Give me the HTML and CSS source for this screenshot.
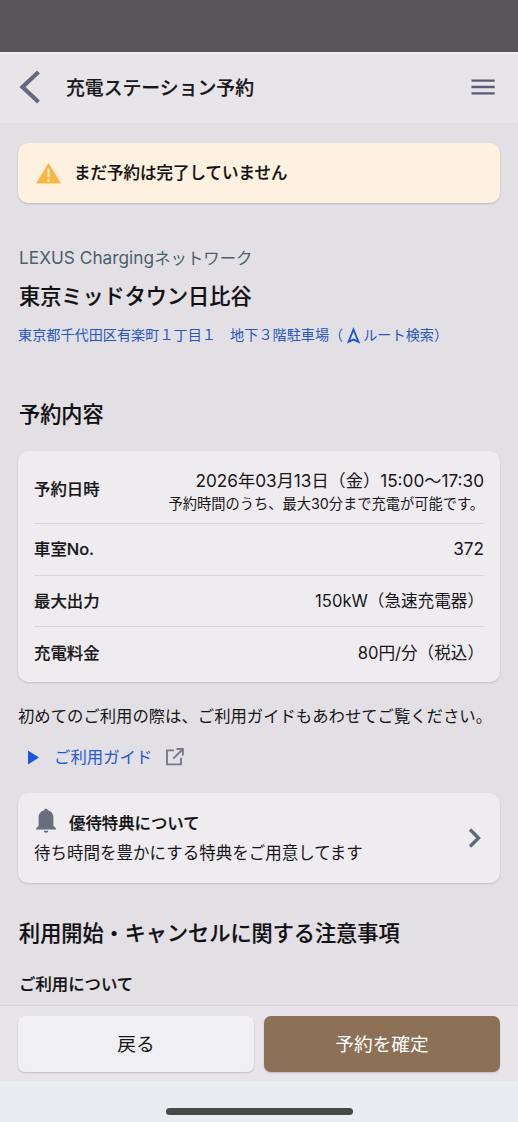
FILE: index.html
```html
<!DOCTYPE html>
<html lang="ja">
<head>
<meta charset="utf-8">
<meta name="viewport" content="width=device-width, initial-scale=1">
<title>充電ステーション予約</title>
<link rel="stylesheet" href="styles.css">
</head>
<body>
<div class="screen">
  <div class="status-bar"></div>
  <header class="header">
    <svg class="back-icon" viewBox="0 0 22 34"><path d="M19.5 2 3.5 17 19.5 32" fill="none" stroke="#646a7d" stroke-width="4.2"/></svg>
    <h1 class="title">充電ステーション予約</h1>
    <svg class="menu-icon" viewBox="0 0 24 18"><path d="M.5 2.7h23.2M.5 9h23.2M.5 15.3h23.2" stroke="#5a597a" stroke-width="2.3"/></svg>
  </header>
  <main class="content">
    <div class="alert">
      <svg class="warn-icon" viewBox="0 0 25 21"><path d="M12.5 0 25 20.5H0Z" fill="#fcb540"/><path d="M12.5 5.5v8.8M12.5 16.2v2.3" stroke="#fff3e0" stroke-width="2"/></svg>
      <span>まだ予約は完了していません</span>
    </div>
    <section class="station">
      <p class="network"><span class="brand">LEXUS Charging</span>ネットワーク</p>
      <h2 class="heading">東京ミッドタウン日比谷</h2>
      <a class="address"><span>東京都千代田区有楽町１丁目１　地下３階駐車場（</span><svg class="route-icon" viewBox="0 0 13 17"><path d="M6.5 2.5 11.5 14.9 6.5 12.6 1.5 14.9Z" fill="none" stroke="#1c53cf" stroke-width="1.8"/></svg><span class="route-label">ルート検索）</span></a>
    </section>
    <h2 class="heading details-heading">予約内容</h2>
    <dl class="card details">
      <div class="row row-date"><dt>予約日時</dt><dd><span class="date">2026年03月13日（金）15:00〜17:30</span><span class="note">予約時間のうち、最大30分まで充電が可能です。</span></dd></div>
      <div class="row"><dt>車室No.</dt><dd class="number">372</dd></div>
      <div class="row"><dt>最大出力</dt><dd>150kW（急速充電器）</dd></div>
      <div class="row"><dt>充電料金</dt><dd>80円/分（税込）</dd></div>
    </dl>
    <p class="intro">初めてのご利用の際は、ご利用ガイドもあわせてご覧ください。</p>
    <a class="guide">
      <svg class="play-icon" viewBox="0 0 11 15"><path d="M0 .5 11 7.5 0 14.5Z" fill="#1c53d8"/></svg>
      <span>ご利用ガイド</span>
      <svg class="external-icon" viewBox="0 0 18 18"><path d="M8 2.4H1V16.4H15V9.8M10.5 1H16.9V7.4M16.4 1.5 7.2 10.7" fill="none" stroke="#787a8b" stroke-width="1.9"/></svg>
    </a>
    <a class="card benefit">
      <div class="benefit-text">
        <div class="benefit-title"><svg class="bell-icon" viewBox="0 0 20 25"><path d="M8.3 2.2a1.7 1.7 0 0 1 3.4 0C15.5 3 17.4 6 17.4 9.6V17.8L20 20.4V21.6H0V20.4L2.6 17.8V9.6C2.6 6 4.5 3 8.3 2.2ZM7.7 22.7H12.3A2.3 2 0 0 1 7.7 22.7Z" fill="#686d80"/></svg><h3 class="subheading">優待特典について</h3></div>
        <p class="benefit-note">待ち時間を豊かにする特典をご用意してます</p>
      </div>
      <svg class="next-icon" viewBox="0 0 13 20"><path d="M2 1.5 10.5 10 2 18.5" fill="none" stroke="#646a7d" stroke-width="3.4"/></svg>
    </a>
    <h2 class="heading rules-heading">利用開始・キャンセルに関する注意事項</h2>
    <h3 class="subheading">ご利用について</h3>
  </main>
  <footer class="actions">
    <button class="button">戻る</button>
    <button class="button button-primary">予約を確定</button>
  </footer>
  <div class="home-area"><div class="home-indicator"></div></div>
</div>
</body>
</html>
```
FILE: styles.css
```css
* { box-sizing: border-box; margin: 0; padding: 0; }
body {
  font-family: Inter, "Noto Sans CJK JP", sans-serif;
  font-size: 16.4px;
  line-height: 24px;
  color: #17161a;
  background: #e2e0e4;
}
svg { display: block; flex: none; }
.screen { display: flex; flex-direction: column; height: 1122px; overflow: hidden; }
.status-bar { flex: none; height: 52px; background: #585658; }
.header {
  flex: none; display: flex; align-items: center; height: 71px;
  padding: 0 23px 3px 19px; background: #e7e5e9; border-top: 2px solid #efedf0;
}
.back-icon { width: 22px; height: 34px; }
.title { flex: 1; margin: 4px 0 0 25px; font-size: 18.85px; white-space: nowrap; }
.menu-icon { width: 24px; height: 18px; }
.content { flex: 1; min-height: 0; overflow: hidden; padding: 20px 18px 0; white-space: nowrap; }
.alert {
  display: flex; align-items: center; gap: 13px; height: 60px; padding-left: 18px;
  border-radius: 10px; background: #fff1df; box-shadow: 0 1px 2px #0000002e;
  color: #111; font-size: 16.5px;
}
.title, .alert, .heading, .subheading, .row dt { font-weight: 500; -webkit-text-stroke: 0.2px currentColor; }
.warn-icon { width: 25px; height: 21px; }
.station { padding: 43px 0 0 1px; }
.network { color: #4b606c; }
.brand { font-size: 17.3px; }
.heading { font-size: 21.15px; line-height: 30px; color: #111014; }
.station .heading { margin-top: 12px; }
.address { display: flex; align-items: center; margin: 11px 0 0 -1px; font-size: 14.15px; line-height: 24px; color: #2857bf; }
.route-icon { width: 13px; height: 17px; margin: 0 3px 0 4px; }
.route-label { font-feature-settings: "halt"; }
.details-heading { margin: 53px 0 0 1px; }
.card { border-radius: 10px; background: #eeecef; box-shadow: 0 1px 2px #00000026; }
.details { margin-top: 21px; height: 231px; padding: 4px 16px 0; }
.row { display: flex; align-items: center; justify-content: space-between; height: 51.7px; border-bottom: 1px solid #d8d6da; }
.row-date { height: 69px; }
.row:last-child { border-bottom: 0; }
.row dd { text-align: right; font-size: 16.6px; }
.row .number { font-size: 17.2px; }
.row-date dd { padding-top: 4px; }
.date, .note { display: block; }
.date { font-size: 17.2px; line-height: 25px; }
.note { font-size: 14.25px; line-height: 22px; }
.intro { margin: 22px 0 0; font-size: 16.35px; }
.guide { display: flex; align-items: center; height: 24px; margin: 17px 0 0 10px; color: #2458d4; }
.play-icon { width: 11px; height: 15px; margin-right: 15px; }
.external-icon { width: 18px; height: 18px; margin-left: 14px; }
.benefit { display: flex; align-items: center; justify-content: space-between; height: 90px; margin-top: 24px; padding: 0 19px 0 16px; }
.benefit-title { display: flex; align-items: center; height: 30px; }
.bell-icon { width: 20px; height: 25px; margin: -6px 13px 0 2px; }
.subheading { font-size: 16.4px; line-height: 24px; color: #111014; }
.benefit-note { font-size: 16.5px; line-height: 30px; }
.next-icon { width: 13px; height: 20px; }
.rules-heading { margin: 36px 0 23px 1px; }
.rules-heading + .subheading { margin-left: 1px; }
.actions {
  flex: none; display: grid; grid-template-columns: 1fr 1fr; gap: 10px; height: 76px;
  padding: 10px 18px 9px; background: #e7e5e9; border-top: 1px solid #d5d3d7;
}
.button {
  border: 0; border-radius: 7px; background: #f0eff2; box-shadow: 0 1px 2px #0000002e;
  font: inherit; font-size: 18.7px; color: #17161a; padding-top: 2px;
}
.button-primary { background: #8c7157; color: #fff; }
.home-area { flex: none; display: flex; justify-content: center; height: 41px; padding-top: 27px; background: #ebebf2; }
.home-indicator { width: 187px; height: 7px; border-radius: 4px; background: #484848; }
```
